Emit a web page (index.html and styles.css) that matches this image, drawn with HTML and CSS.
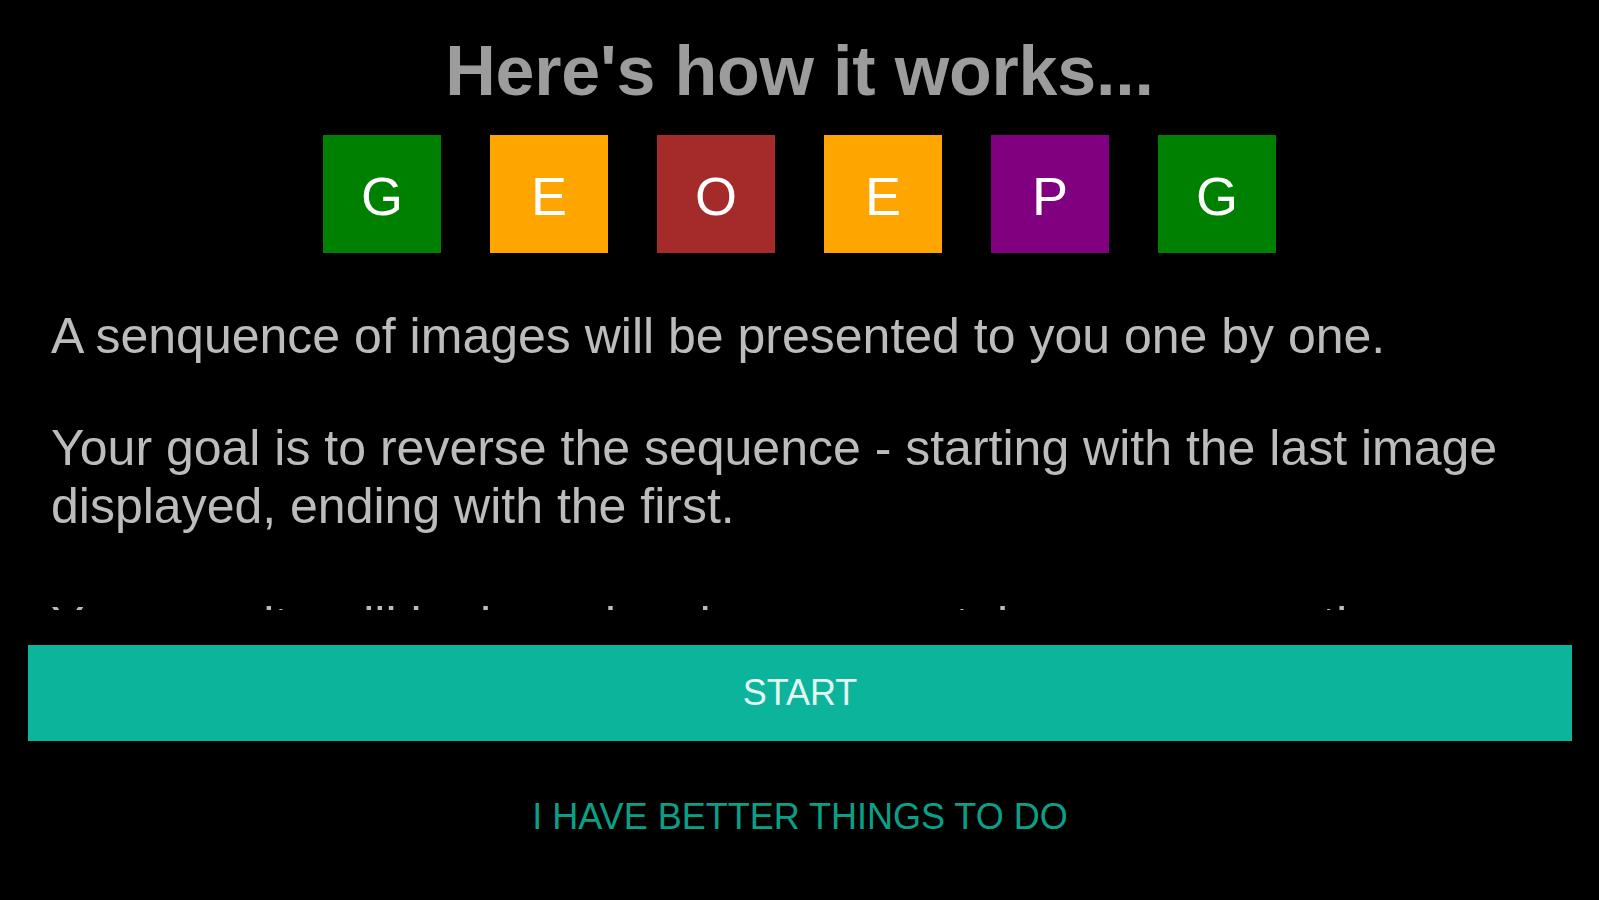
FILE: index.html
```html
<!DOCTYPE html>
<html lang="en">
<head>
<meta charset="utf-8">
<title>Here's how it works</title>
<link rel="stylesheet" href="styles.css">
</head>
<body>
<main class="screen">
  <section class="content">
    <h1 class="title">Here's how it works...</h1>
    <div class="tiles">
      <div class="tile tile-green">G</div>
      <div class="tile tile-orange">E</div>
      <div class="tile tile-brown">O</div>
      <div class="tile tile-orange">E</div>
      <div class="tile tile-purple">P</div>
      <div class="tile tile-green">G</div>
    </div>
    <p class="text">A senquence of images will be presented to you one by one.</p>
    <p class="text">Your goal is to reverse the sequence - starting with the last image displayed, ending with the first.</p>
    <p class="text text-last">Your results will be based on how accurately you reverse the sequence.</p>
  </section>
  <footer class="actions">
    <button class="btn btn-primary" type="button">START</button>
    <button class="btn btn-text" type="button">I HAVE BETTER THINGS TO DO</button>
  </footer>
</main>
</body>
</html>
```

FILE: styles.css
```css
html, body {
  margin: 0;
  padding: 0;
  background: #000;
}

body {
  font-family: "Liberation Sans", Arial, sans-serif;
  width: 1599px;
  height: 900px;
  overflow: hidden;
}

.screen {
  display: flex;
  flex-direction: column;
  height: 900px;
}

.content {
  height: 610px;
  overflow: hidden;
  padding: 0 51px;
  box-sizing: border-box;
}

.title {
  margin: 36px 0 0;
  font-size: 70px;
  line-height: 70px;
  font-weight: 700;
  color: #9c9c9c;
  text-align: center;
  letter-spacing: -0.2px;
}

.tiles {
  display: flex;
  justify-content: center;
  gap: 49px;
  margin-top: 29px;
}

.tile {
  width: 118px;
  height: 118px;
  display: flex;
  align-items: center;
  justify-content: center;
  color: #fff;
  font-size: 54px;
  line-height: 1;
  padding-top: 4px;
  box-sizing: border-box;
}

.tile-green { background: #008000; }
.tile-orange { background: #ffa500; }
.tile-brown { background: #a52a2a; }
.tile-purple { background: #800080; }

.text {
  margin: 54px 0 0;
  font-size: 50px;
  line-height: 58px;
  color: #bcbcbc;
}

.text-last {
  margin-top: 61px;
}

.actions {
  display: flex;
  flex-direction: column;
  gap: 28px;
  padding: 35px 27px 0 28px;
}

.btn {
  height: 96px;
  border: 0;
  margin: 0;
  padding: 0;
  font-family: "Liberation Sans", Arial, sans-serif;
  font-size: 36px;
  cursor: pointer;
}

.btn-primary {
  background: #0bb49b;
  color: #e4f6f2;
}

.btn-text {
  background: transparent;
  color: #0aa088;
}
```
